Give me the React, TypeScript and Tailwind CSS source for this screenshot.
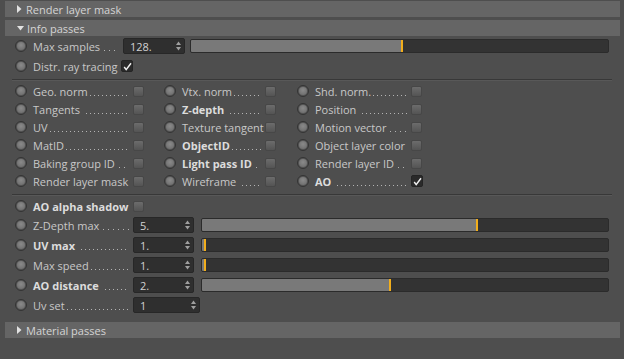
import React from 'react';

type Dots = 'dense' | 'spaced' | 'gap';
type Item = { label: string; dots?: Dots; bold?: boolean; checked?: boolean };

function Triangle({ open }: { open: boolean }) {
    return open ? (
        <svg width="7" height="5" viewBox="0 0 7 5" className="shrink-0">
            <polygon points="0,0 7,0 3.5,4.5" fill="#e2e2e2" />
        </svg>
    ) : (
        <svg width="5" height="8" viewBox="0 0 5 8" className="shrink-0">
            <polygon points="0,0 4.5,4 0,8" fill="#e2e2e2" />
        </svg>
    );
}

function SectionBar({ title, open = false, className = '' }: { title: string; open?: boolean; className?: string }) {
    return (
        <div className={`h-[16px] bg-[#656565] flex items-center pl-[12px] gap-[3px] text-[#d4d4d4] ${className}`}>
            <Triangle open={open} />
            <span className={open ? '' : 'ml-[1px]'}>{title}</span>
        </div>
    );
}

function Radio() {
    return (
        <span className="w-[12px] h-[12px] rounded-full bg-[#555555] border border-[#343434] flex items-center justify-center shrink-0">
            <span className="w-[8px] h-[8px] rounded-full bg-[radial-gradient(circle_at_50%_40%,#8a8a8a,#686868)]" />
        </span>
    );
}

function Checkbox({ checked = false }: { checked?: boolean }) {
    if (checked) {
        return (
            <span className="w-[12px] h-[12px] rounded-[2px] bg-[#2a2a2a] border border-[#242424] flex items-center justify-center shrink-0">
                <svg width="9" height="9" viewBox="0 0 9 9">
                    <path d="M1.2 5 L3.2 7.6 L8 1.2" stroke="#f0f0f0" strokeWidth="1.5" fill="none" />
                </svg>
            </span>
        );
    }
    return <span className="w-[11px] h-[11px] rounded-[2px] bg-gradient-to-b from-[#6c6c6c] to-[#545454] border border-[#474747] shrink-0" />;
}

// dotted leader drawn as a background pattern, ends a few px before the control
function Leader({ kind }: { kind: Dots }) {
    const pattern =
        kind === 'spaced'
            ? 'bg-[linear-gradient(to_right,#b4b4b4_1px,transparent_1px)] bg-[length:5px_1px] ml-[4px]'
            : kind === 'gap'
            ? 'bg-[linear-gradient(to_right,#b4b4b4_1px,transparent_1px)] bg-[length:4px_1px] ml-[6px]'
            : 'bg-[linear-gradient(to_right,#b4b4b4_1px,transparent_1px)] bg-[length:4px_1px] ml-[2px]';
    return <span className={`flex-1 self-end mb-[1px] h-[1px] mr-[4px] ${pattern}`} />;
}

function Label({ item, width }: { item: Item; width: number }) {
    return (
        <div className="flex items-center shrink-0 h-[12px]" style={{ width }}>
            <span className={`whitespace-nowrap ${item.bold ? 'font-bold text-[#dcdcdc]' : ''}`}>{item.label}</span>
            {item.dots && <Leader kind={item.dots} />}
        </div>
    );
}

function Spinner() {
    return (
        <svg width="5" height="10" viewBox="0 0 5 10" className="shrink-0">
            <polygon points="2.5,0.5 5,4 0,4" fill="#a0a0a0" />
            <polygon points="0,6 5,6 2.5,9.5" fill="#a0a0a0" />
        </svg>
    );
}

function NumberBox({ value, width }: { value: string; width: number }) {
    return (
        <div
            className="h-[16px] bg-[#2f2f2f] border border-[#272727] rounded-[2px] flex items-center justify-between pl-[6px] pr-[3px] shrink-0 text-[#d2d2d2]"
            style={{ width }}
        >
            <span>{value}</span>
            <Spinner />
        </div>
    );
}

function Slider({ fill, className = '' }: { fill: number; className?: string }) {
    return (
        <div className={`flex-1 h-[14px] bg-[#333333] border border-[#2b2b2b] rounded-[2px] flex overflow-hidden ${className}`}>
            <div className="bg-[#797979]" style={{ width: `${fill * 100}%` }} />
            <div className="w-[2px] bg-[#f2ae1c]" />
        </div>
    );
}

const columns: { width: number; items: Item[] }[] = [
    {
        width: 100,
        items: [
            { label: 'Geo. norm', dots: 'dense' },
            { label: 'Tangents', dots: 'gap' },
            { label: 'UV', dots: 'dense' },
            { label: 'MatID', dots: 'dense' },
            { label: 'Baking group ID', dots: 'spaced' },
            { label: 'Render layer mask' },
        ],
    },
    {
        width: 83,
        items: [
            { label: 'Vtx. norm', dots: 'dense' },
            { label: 'Z-depth', bold: true, dots: 'gap' },
            { label: 'Texture tangent' },
            { label: 'ObjectID', bold: true, dots: 'dense' },
            { label: 'Light pass ID', bold: true, dots: 'spaced' },
            { label: 'Wireframe', dots: 'gap' },
        ],
    },
    {
        width: 96,
        items: [
            { label: 'Shd. norm.', dots: 'dense' },
            { label: 'Position', dots: 'gap' },
            { label: 'Motion vector', dots: 'spaced' },
            { label: 'Object layer color' },
            { label: 'Render layer ID', dots: 'spaced' },
            { label: 'AO', bold: true, dots: 'gap', checked: true },
        ],
    },
];

const sliderRows: { label: string; value: string; fill: number; bold?: boolean; dots: Dots }[] = [
    { label: 'Z-Depth max', value: '5.', fill: 0.675, dots: 'spaced' },
    { label: 'UV max', value: '1.', fill: 0.005, bold: true, dots: 'gap' },
    { label: 'Max speed', value: '1.', fill: 0.005, dots: 'dense' },
    { label: 'AO distance', value: '2.', fill: 0.46, bold: true, dots: 'gap' },
];

export default function App() {
    return (
        <div className="w-[624px] h-[359px] bg-[#4e4e4e] overflow-hidden font-['Open_Sans','Noto_Sans',sans-serif] text-[11px] leading-none text-[#c8c8c8] select-none">
            {/* Section headers */}
            <div className="pl-[5px] pr-[4px] pt-[1px]">
                <SectionBar title="Render layer mask" />
                <SectionBar title="Info passes" open className="mt-[3px]" />
            </div>

            {/* Max samples + distr. ray tracing */}
            <div className="pl-[15px] pr-[15px]">
                <div className="h-[20px] flex items-center">
                    <Radio />
                    <div className="ml-[6px]"><Label item={{ label: 'Max samples', dots: 'spaced' }} width={90} /></div>
                    <NumberBox value="128." width={62} />
                    <Slider fill={0.503} className="ml-[5px]" />
                </div>
                <div className="h-[20px] flex items-center">
                    <Radio />
                    <div className="ml-[6px]"><Label item={{ label: 'Distr. ray tracing' }} width={88} /></div>
                    <Checkbox checked />
                </div>
            </div>

            <div className="mx-[12px] mt-[3px] h-[1px] bg-[#383838]" />
            <div className="mx-[12px] h-[1px] bg-[#585858]" />

            {/* Pass checkboxes */}
            <div className="pl-[15px] mt-[1px] flex">
                {columns.map((col, ci) => (
                    <div key={ci} className={ci === 0 ? 'w-[149px]' : ci === 1 ? 'w-[133px]' : 'flex-1'}>
                        {col.items.map((item) => (
                            <div key={item.label} className="h-[18px] flex items-center">
                                <Radio />
                                <div className="ml-[6px]"><Label item={item} width={col.width} /></div>
                                <Checkbox checked={item.checked} />
                            </div>
                        ))}
                    </div>
                ))}
            </div>

            <div className="mx-[12px] mt-[4px] h-[1px] bg-[#383838]" />
            <div className="mx-[12px] h-[1px] bg-[#585858]" />

            {/* AO + ranges */}
            <div className="pl-[15px] pr-[15px] mt-[1px]">
                <div className="h-[18px] flex items-center">
                    <Radio />
                    <div className="ml-[6px]"><Label item={{ label: 'AO alpha shadow', bold: true }} width={100} /></div>
                    <Checkbox />
                </div>
                {sliderRows.map((r) => (
                    <div key={r.label} className="h-[20px] flex items-center">
                        <Radio />
                        <div className="ml-[6px]"><Label item={{ label: r.label, bold: r.bold, dots: r.dots }} width={100} /></div>
                        <NumberBox value={r.value} width={61} />
                        <Slider fill={r.fill} className="ml-[7px]" />
                    </div>
                ))}
                <div className="h-[20px] flex items-center">
                    <Radio />
                    <div className="ml-[6px]"><Label item={{ label: 'Uv set', dots: 'dense' }} width={100} /></div>
                    <NumberBox value="1" width={67} />
                </div>
            </div>

            <div className="pl-[5px] pr-[4px] mt-[7px]">
                <SectionBar title="Material passes" />
            </div>
        </div>
    );
}
